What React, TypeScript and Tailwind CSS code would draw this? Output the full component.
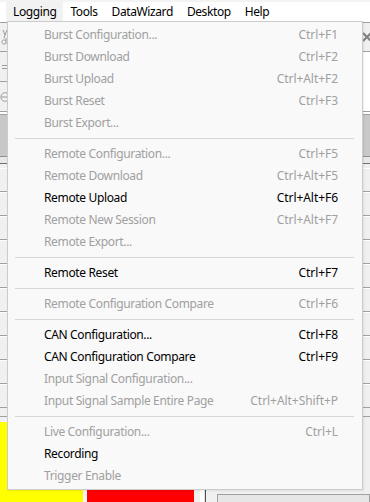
import React from "react";

type Item = { label: string; shortcut?: string; enabled?: boolean } | "sep";

const items: Item[] = [
  { label: "Burst Configuration...", shortcut: "Ctrl+F1" },
  { label: "Burst Download", shortcut: "Ctrl+F2" },
  { label: "Burst Upload", shortcut: "Ctrl+Alt+F2" },
  { label: "Burst Reset", shortcut: "Ctrl+F3" },
  { label: "Burst Export..." },
  "sep",
  { label: "Remote Configuration...", shortcut: "Ctrl+F5" },
  { label: "Remote Download", shortcut: "Ctrl+Alt+F5" },
  { label: "Remote Upload", shortcut: "Ctrl+Alt+F6", enabled: true },
  { label: "Remote New Session", shortcut: "Ctrl+Alt+F7" },
  { label: "Remote Export..." },
  "sep",
  { label: "Remote Reset", shortcut: "Ctrl+F7", enabled: true },
  "sep",
  { label: "Remote Configuration Compare", shortcut: "Ctrl+F6" },
  "sep",
  { label: "CAN Configuration...", shortcut: "Ctrl+F8", enabled: true },
  { label: "CAN Configuration Compare", shortcut: "Ctrl+F9", enabled: true },
  { label: "Input Signal Configuration..." },
  { label: "Input Signal Sample Entire Page", shortcut: "Ctrl+Alt+Shift+P" },
  "sep",
  { label: "Live Configuration...", shortcut: "Ctrl+L" },
  { label: "Recording", enabled: true },
  { label: "Trigger Enable" },
];

const menus = ["Logging", "Tools", "DataWizard", "Desktop", "Help"];

function GridRow() {
  return (
    <div className="h-[24px] shrink-0 bg-[#f0f0f0] border-b border-[#a0a0a0] shadow-[inset_0_1px_0_#ffffff]" />
  );
}

export default function App() {
  return (
    <div
      className="relative w-[370px] h-[502px] overflow-hidden bg-white text-[12px] text-black"
      style={{ fontFamily: '"Segoe UI", "Noto Sans", sans-serif' }}
    >
      {/* Menu bar */}
      <div className="h-[22px] border-t-2 border-[#f3f3f3] bg-white flex pl-[6px] tracking-[-0.4px]">
        {menus.map((m, i) => (
          <div
            key={m}
            className={`h-[19px] px-[7px] flex items-center leading-none ${i === 0 ? "bg-[#f2f2f2]" : ""}`}
          >
            {m}
          </div>
        ))}
      </div>

      {/* Background application content */}
      <div className="flex flex-col">
        <div className="h-[30px] flex border-t border-[#a0a0a0]">
          <div className="w-[7px] bg-[#f0f0f0] border-b border-[#a0a0a0] flex items-center justify-end overflow-hidden">
            <svg width="7" height="16" viewBox="0 0 7 16" fill="none" stroke="#9a9a9a" strokeWidth="1">
              <path d="M3 1 L5 6 M7 1 L5 6 L4 9" />
              <path d="M6 9 V15 M6 12 C4 10 2 11 2 13 C2 15 4 16 6 14" />
            </svg>
          </div>
          <div className="flex-1" />
          <div className="w-[8px] bg-[#f0f0f0] border-b border-[#a0a0a0] flex items-center overflow-hidden">
            <svg width="8" height="10" viewBox="0 0 8 10" stroke="#808080" strokeWidth="2">
              <path d="M1 1 L9 9 M9 1 L1 9" />
            </svg>
          </div>
        </div>
        <div className="h-[30px] flex">
          <div className="w-[7px] bg-[#f0f0f0] border-b border-[#a0a0a0] flex items-center overflow-hidden">
            <svg width="7" height="8" viewBox="0 0 7 8" stroke="#9a9a9a" strokeWidth="1">
              <path d="M2 2.5 H7 M2 5.5 H7" />
            </svg>
          </div>
        </div>
        <div className="h-[30px] flex">
          <div className="w-[7px] bg-[#f0f0f0] border-b border-[#a0a0a0] flex items-center overflow-hidden">
            <svg width="7" height="12" viewBox="0 0 7 12" fill="none" stroke="#9a9a9a" strokeWidth="1">
              <path d="M7 2 C3 1 1 3 1 6 C1 9 3 11 7 10 M1.5 6 H7" />
            </svg>
          </div>
          <div className="flex-1" />
          <div className="w-[8px] border-b border-[#a0a0a0]" />
        </div>
        <div className="h-[3px] border-b border-[#a0a0a0] bg-white" />
        <div className="h-[42px] bg-[#c8c8c8] border-b border-[#909090]" />
        <div className="h-[7px] bg-[#e8e8e8] border-b border-[#707070]" />
        <div className="h-[5px] bg-[#f0f0f0] border-b border-white" />
        <div className="h-[23px] bg-[#f0f0f0] border-b border-[#a0a0a0]" />
        {Array.from({ length: 9 }).map((_, i) => (
          <GridRow key={i} />
        ))}
        <div className="h-[9px] bg-[#f0f0f0] border-b border-[#a0a0a0]" />
        <div className="h-[5px] bg-[#f0f0f0]" />
        <div className="flex h-[80px] bg-[#f0f0f0]">
          <div className="w-[83px] bg-[#ffff00]" />
          <div className="w-[4px] bg-[#f5f5f5]" />
          <div className="w-[107px] bg-[#ff0000]" />
          <div className="w-[6px]" />
          <div className="w-[4px] bg-white" />
          <div className="w-[1px] bg-[#e0e0e0]" />
          <div className="w-[1px] bg-[#505050]" />
          <div className="flex-1 pl-[11px] pt-[72px]">
            <div className="h-[10px] border border-[#a0a0a0] bg-[#e6e6e6]" />
          </div>
        </div>
      </div>

      {/* Dropdown menu overlay */}
      <div className="absolute left-[7px] top-[21px] w-[356px] bg-[#f9f9f9] border border-[#cccccc] pt-[2px] pb-[2px] shadow-[1px_1px_2px_rgba(0,0,0,0.08)]">
        {items.map((it, i) =>
          it === "sep" ? (
            <div key={i} className="h-[9px] flex items-center pl-[7px] pr-[8px]">
              <div className="h-px w-full bg-[#d7d7d7]" />
            </div>
          ) : (
            <div
              key={i}
              className={`h-[22px] flex items-center justify-between pl-[36px] pr-[24px] whitespace-nowrap ${
                it.enabled ? "text-black" : "text-[#a0a0a0]"
              }`}
            >
              <span className="tracking-[-0.35px]">{it.label}</span>
              <span className="tracking-[-0.05px]">{it.shortcut ?? ""}</span>
            </div>
          )
        )}
      </div>
    </div>
  );
}
